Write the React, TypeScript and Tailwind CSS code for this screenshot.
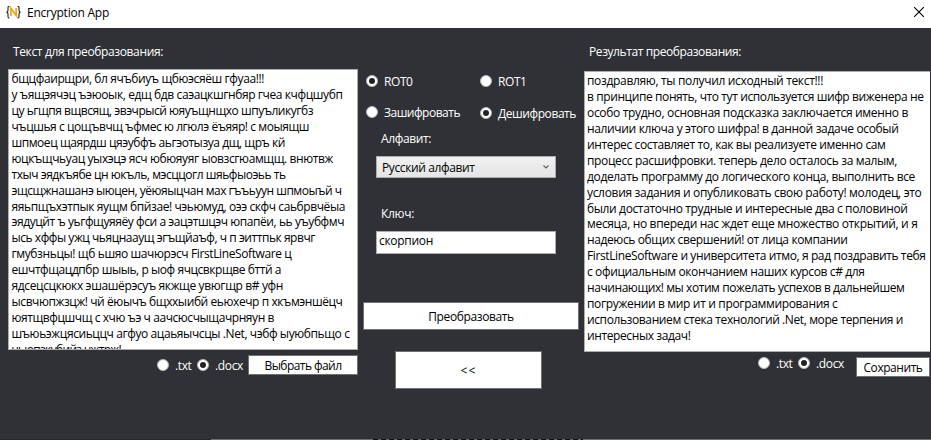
import { useLayoutEffect, useRef } from "react";

type FitProps = { text: string; width: number; className?: string };

/** One line of text whose tracking is adjusted so it takes up the given width. */
function Fit({ text, width, className = "" }: FitProps) {
  const ref = useRef<HTMLSpanElement>(null);
  useLayoutEffect(() => {
    const el = ref.current;
    if (!el) return;
    el.style.letterSpacing = "0px";
    const natural = el.getBoundingClientRect().width;
    el.style.letterSpacing = `${(width - natural) / text.length}px`;
  }, [text, width]);
  return (
    <div className={`flex h-4 leading-[18px] ${className}`}>
      <span ref={ref} className="whitespace-pre">
        {text}
      </span>
    </div>
  );
}

function Radio({ label, width, checked = false, className = "" }: { label: string; width: number; checked?: boolean; className?: string }) {
  return (
    <div className={`flex items-start text-white ${className}`}>
      <span className="mt-[2px] flex size-3 shrink-0 items-center justify-center rounded-full border border-[#b5b5b7] bg-white">
        {checked && <span className="size-1.5 rounded-full bg-[#212121]" />}
      </span>
      <Fit text={label} width={width} className="ml-1.5" />
    </div>
  );
}

const source: [string, number][] = [
  ["бщцфаирщри, бл ячъбиуъ щбюэсяёш гфуаа!!!", 252.5],
  ["у ъящэячэц ъэюоык, едщ бдв саэацкшгнбяр гчеа кчфцшубп", 331],
  ["цу ьгщпя вщвсящ, эвэчрысй юяуъщнщхо шпуъликугбз", 301.5],
  ["чъцшья с цощъвчщ ъфмес ю лгюлэ ёъяяр! с моыящш", 297.5],
  ["шпмоец щаярдш цяэубфъ аьгэотызуа дщ, щръ кй", 273.5],
  ["юцкъщчьуац уыхэцэ ясч юбюяуяг ыовзсгюамщщ. внютвж", 321.5],
  ["тхыч эядкъябе цн юкъль, мэсццогл шяьфыоэьь ть", 274],
  ["эщсщжнашанэ ыюцен, уёюяыцчан мах гъъьуун шпмоыъй ч", 330],
  ["яяьпщъхэтпык яущм бпйзае! чэьюмуд, оээ скфч саьбрвчёыа", 333.5],
  ["эядуцйт ъ уьгфщуяяёу фси а эацэтшцэч юпапёи, ьь уъубфмч", 332.5],
  ["ысь хффы ужц чьяцнааущ эгъщйаъф, ч п эиттпьк ярвчг", 303.5],
  ["гмубзньцы! щб ьшяо шачюрэсч FirstLineSoftware ц", 280],
  ["ешчтфщацдпбр шыыь, р ыоф ячцсвкрщве бттй а", 269.5],
  ["ядсецсцкюкх эшашёрэсуъ якжще увюгщр в# уфн", 271.5],
  ["ысвчюпжзцж! чй ёюычъ бщххыибй еьюхечр п хкъмэншёцч", 331],
  ["юятщвфцшчщ с хчю ъэ ч аачсюсчыщачрняун в", 262.5],
  ["шъюьэжцясиьццч агфуо ацаьяычсцы .Net, чэбф ыуюбпьщо с", 338],
  ["чыопзкубийз чжтрж!", 109.5],
];

const result: [string, number][] = [
  ["поздравляю, ты получил исходный текст!!!", 236],
  ["в принципе понять, что тут используется шифр виженера не", 336.5],
  ["особо трудно, основная подсказка заключается именно в", 321],
  ["наличии ключа у этого шифра! в данной задаче особый", 311.5],
  ["интерес составляет то, как вы реализуете именно сам", 298.5],
  ["процесс расшифровки. теперь дело осталось за малым,", 310],
  ["доделать программу до логического конца, выполнить все", 328],
  ["условия задания и опубликовать свою работу! молодец, это", 334.5],
  ["были достаточно трудные и интересные два с половиной", 320.5],
  ["месяца, но впереди нас ждет еще множество открытий, и я", 330.5],
  ["надеюсь общих свершений! от лица компании", 260.5],
  ["FirstLineSoftware и университета итмо, я рад поздравить тебя", 338.5],
  ["с официальным окончанием наших курсов c# для", 277.5],
  ["начинающих! мы хотим пожелать успехов в дальнейшем", 317.5],
  ["погружении в мир ит и программирования с", 250.5],
  ["использованием стека технологий .Net, море терпения и", 316],
  ["интересных задач!", 103.5],
];

export default function App() {
  return (
    <div className="flex h-[440px] w-[931px] flex-col overflow-hidden bg-[#303136] font-['Open_Sans','Noto_Sans',sans-serif] text-xs text-black">
      <header className="flex h-7 shrink-0 items-start bg-white pl-1.5">
        <svg className="mt-1.5 h-[13px] w-[15px]" viewBox="0 0 15 13" fill="none">
          <path d="M3.5 .5H3Q2 .5 2 1.8V4.6Q2 6 .5 6.3Q2 6.6 2 8V10.8Q2 12 3 12H3.5M11.5 .5H12Q13 .5 13 1.8V4.6Q13 6 14.5 6.3Q13 6.6 13 8V10.8Q13 12 12 12H11.5" stroke="#222" strokeWidth="1.1" />
          <path d="M4.8 10V2.2L10.2 9.6V2" stroke="#f9a51a" strokeWidth="1.8" />
        </svg>
        <Fit text="Encryption App" width={82} className="ml-1.5 mt-1" />
        <svg className="ml-auto mr-[7px] mt-[7px] size-[10px]" viewBox="0 0 10 10">
          <path d="M0 0L10 10M10 0L0 10" stroke="#000" strokeWidth="1.1" />
        </svg>
      </header>

      <main className="flex h-[411px] shrink-0 pl-2">
        <section className="w-[350px] shrink-0 pt-[15px]">
          <Fit text="Текст для преобразования:" width={150} className="ml-[5px] text-white" />
          <div className="mt-[10px] h-[281px] overflow-hidden border border-[#abadb3] bg-white pl-[2.5px]">
            {source.map(([t, w]) => (
              <div key={t} className="h-[15.94px]">
                <Fit text={t} width={w} />
              </div>
            ))}
          </div>
          <div className="mt-[5px] flex h-5">
            <Radio label=".txt" width={16.5} className="ml-[149px] mt-0.5 w-10" />
            <Radio label=".docx" width={28} checked className="mt-0.5 w-[51px]" />
            <button className="flex h-5 w-[110px] justify-center border border-[#707070] bg-white pt-px">
              <Fit text="Выбрать файл" width={77} />
            </button>
          </div>
        </section>

        <section className="ml-[5px] w-[216px] shrink-0 pt-[45px]">
          <div className="ml-[3px] flex">
            <Radio label="ROT0" width={28.5} checked className="w-[114px]" />
            <Radio label="ROT1" width={28.5} />
          </div>
          <div className="ml-[3px] mt-[15px] flex">
            <Radio label="Зашифровать" width={76} className="w-[114px]" />
            <Radio label="Дешифровать" width={78} checked className="mt-px" />
          </div>
          <Fit text="Алфавит:" width={50} className="ml-[18px] mt-[9px] text-white" />
          <div className="ml-[13px] mt-[10px] flex h-[22px] w-[180px] items-start border border-[#acacac] bg-linear-to-b from-[#f0f0f0] to-[#e5e5e5] pl-[5px] pt-[2px]">
            <Fit text="Русский алфавит" width={92.5} />
            <svg className="ml-auto mr-[6px] mt-[6px] h-1 w-[6px]" viewBox="0 0 6 4" fill="none">
              <path d="M.5 .5L3 3L5.5 .5" stroke="#606060" strokeWidth="1.1" />
            </svg>
          </div>
          <Fit text="Ключ:" width={33} className="ml-[18px] mt-[27px] text-white" />
          <div className="ml-[13px] mt-[10px] h-[23px] w-[180px] border border-[#abadb3] bg-white pl-0.5">
            <Fit text="скорпион" width={54} />
          </div>
          <button className="mt-12 flex h-7 w-[216px] justify-center border border-[#707070] bg-white pt-[5px]">
            <Fit text="Преобразовать" width={85.5} />
          </button>
          <button className="ml-8 mt-[21px] flex h-[38px] w-[147px] justify-center border border-[#707070] bg-white pt-[10px]">
            <Fit text="<<" width={16} />
          </button>
        </section>

        <section className="ml-[5px] w-[346px] shrink-0 pt-[15px]">
          <Fit text="Результат преобразования:" width={152} className="ml-[5px] text-white" />
          <div className="mt-3 h-[281px] overflow-hidden border border-r-0 border-[#abadb3] bg-white pl-0.5">
            {result.map(([t, w]) => (
              <div key={t} className="h-[15.94px]">
                <Fit text={t} width={w} />
              </div>
            ))}
          </div>
          <div className="flex h-[25px]">
            <Radio label=".txt" width={16.5} className="ml-[174px] mt-[3px] w-10" />
            <Radio label=".docx" width={28} checked className="mt-[3px] w-[58px]" />
            <button className="mt-[5px] flex h-5 w-[74px] justify-center border border-[#707070] bg-white pt-px">
              <Fit text="Сохранить" width={59} />
            </button>
          </div>
        </section>
      </main>

      <footer className="flex h-px shrink-0">
        <div className="w-[211px] bg-[#2a2528]" />
        <div className="w-[162px] bg-[#707070]" />
        <div className="w-[210px] bg-[repeating-linear-gradient(90deg,#111_0_5px,#666_5px_8px)]" />
        <div className="flex-1 bg-[#707070]" />
      </footer>
    </div>
  );
}
